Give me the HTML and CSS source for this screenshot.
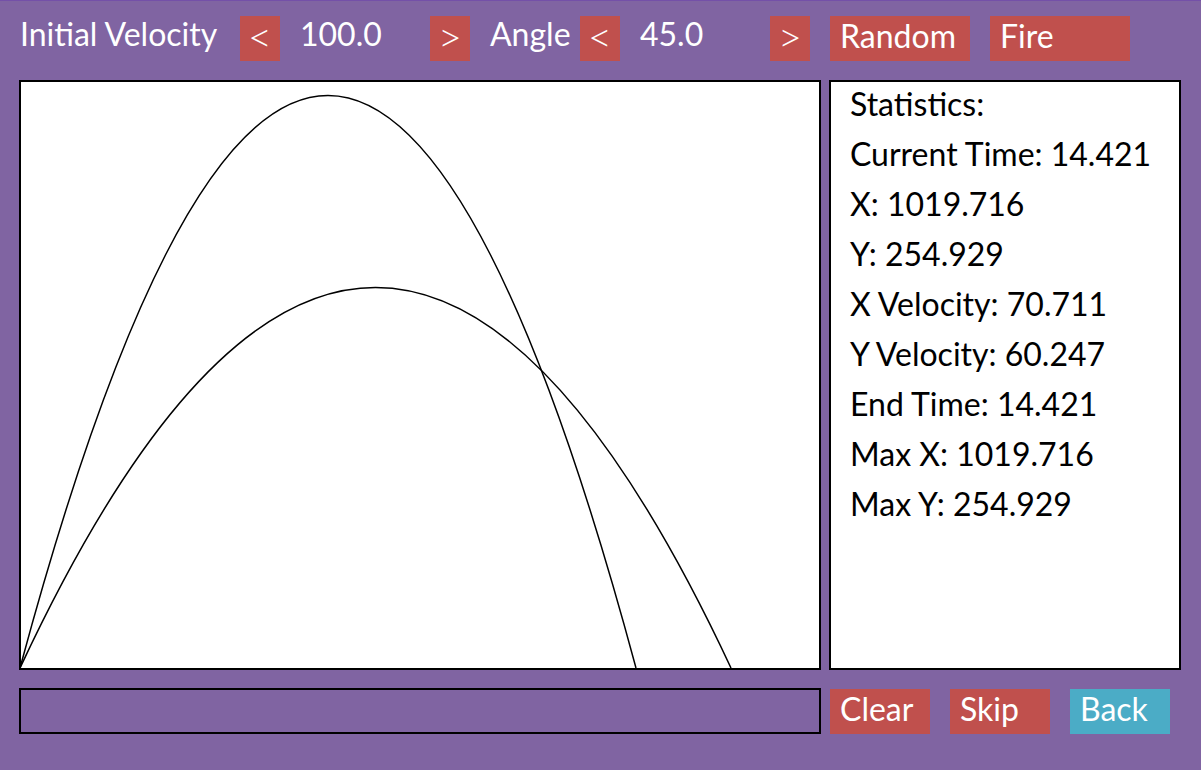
FILE: index.html
```html
<!DOCTYPE html>
<html>
<head>
<meta charset="utf-8">
<link rel="stylesheet" href="styles.css">
</head>
<body>
<div class="app">
  <div class="toolbar">
    <span class="label label-vel">Initial Velocity</span>
    <div class="btn btn-arrow">&lt;</div>
    <span class="value">100.0</span>
    <div class="btn btn-arrow">&gt;</div>
    <span class="label label-angle">Angle</span>
    <div class="btn btn-arrow">&lt;</div>
    <span class="value">45.0</span>
    <div class="btn btn-arrow">&gt;</div>
    <div class="btn btn-wide btn-random">Random</div>
    <div class="btn btn-wide btn-fire">Fire</div>
  </div>
  <div class="main">
    <div class="canvas">
      <svg class="plot" width="798" height="586" viewBox="21 82 798 586">
        <path d="M20 668 Q328 -477 636 668" fill="none" stroke="#000" stroke-width="1.5"/>
        <path d="M20 668 Q375.5 -93 731 668" fill="none" stroke="#000" stroke-width="1.5"/>
      </svg>
    </div>
    <div class="stats">
      <div class="stat">Statistics:</div>
      <div class="stat">Current Time: 14.421</div>
      <div class="stat">X: 1019.716</div>
      <div class="stat">Y: 254.929</div>
      <div class="stat">X Velocity: 70.711</div>
      <div class="stat">Y Velocity: 60.247</div>
      <div class="stat">End Time: 14.421</div>
      <div class="stat">Max X: 1019.716</div>
      <div class="stat">Max Y: 254.929</div>
    </div>
  </div>
  <div class="bottom">
    <div class="input"></div>
    <div class="btn btn-mid btn-clear">Clear</div>
    <div class="btn btn-mid">Skip</div>
    <div class="btn btn-mid btn-blue">Back</div>
  </div>
</div>
</body>
</html>
```
FILE: styles.css
```css
html, body {
  margin: 0;
  padding: 0;
}
body {
  background: #8064a2;
  font-family: Lato, "Open Sans", sans-serif;
  font-size: 32px;
  color: #fff;
}
.app {
  width: 1201px;
  height: 770px;
  box-sizing: border-box;
  border-top: 1px solid #7450a8;
  overflow: hidden;
}
.toolbar {
  display: flex;
  align-items: flex-start;
  padding: 15px 0 0 20px;
}
.label, .value {
  display: block;
  height: 45px;
  line-height: 35px;
  white-space: nowrap;
}
.label-vel {
  width: 220px;
}
.label-angle {
  width: 90px;
  padding-left: 20px;
}
.value {
  width: 130px;
  padding-left: 20px;
}
.btn {
  height: 45px;
  line-height: 39px;
  background: #c0504d;
  color: #fff;
  box-sizing: border-box;
  white-space: nowrap;
}
.btn-arrow {
  width: 40px;
  text-align: center;
  font-size: 42px;
  font-weight: 300;
  line-height: 40px;
}
.btn-wide {
  width: 140px;
  padding-left: 10px;
}
.btn-random {
  margin-left: 20px;
}
.btn-fire {
  margin-left: 20px;
}
.main {
  display: flex;
  gap: 8px;
  margin-top: 19px;
  padding-left: 19px;
}
.canvas {
  width: 802px;
  height: 590px;
  box-sizing: border-box;
  border: 2px solid #000;
  background: #fff;
  overflow: hidden;
}
.plot {
  display: block;
}
.stats {
  width: 352px;
  height: 590px;
  box-sizing: border-box;
  border: 2px solid #000;
  background: #fff;
  color: #000;
  padding-left: 19px;
  padding-top: 1px;
  display: flex;
  flex-direction: column;
  gap: 8px;
}
.stat {
  line-height: 42px;
  white-space: nowrap;
}
.bottom {
  display: flex;
  align-items: flex-start;
  margin-top: 18px;
  padding-left: 19px;
}
.input {
  width: 802px;
  height: 46px;
  box-sizing: border-box;
  border: 2px solid #000;
}
.btn-mid {
  width: 100px;
  margin-top: 1px;
  margin-left: 20px;
  padding-left: 10px;
}
.btn-clear {
  margin-left: 9px;
}
.btn-blue {
  background: #4bacc6;
}
```
